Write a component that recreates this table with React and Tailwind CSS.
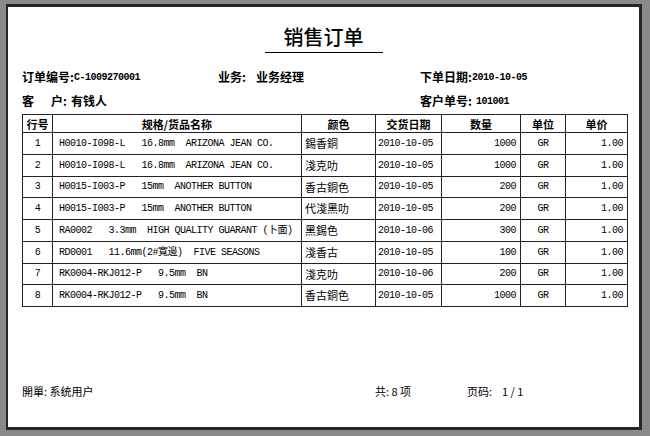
import React from "react";

const rows = [
  { no: 1, spec: "H0010-I098-L   16.8mm  ARIZONA JEAN CO.", color: "錫香銅", date: "2010-10-05", qty: 1000 },
  { no: 2, spec: "H0010-I098-L   16.8mm  ARIZONA JEAN CO.", color: "淺克叻", date: "2010-10-05", qty: 1000 },
  { no: 3, spec: "H0015-I003-P   15mm  ANOTHER BUTTON", color: "香古銅色", date: "2010-10-05", qty: 200 },
  { no: 4, spec: "H0015-I003-P   15mm  ANOTHER BUTTON", color: "代淺黑叻", date: "2010-10-05", qty: 200 },
  { no: 5, spec: "RA0002   3.3mm  HIGH QUALITY GUARANT (卜面)", color: "黑錫色", date: "2010-10-06", qty: 300 },
  { no: 6, spec: "RD0001   11.6mm(2#寬邊)  FIVE SEASONS", color: "淺香古", date: "2010-10-05", qty: 100 },
  { no: 7, spec: "RK0004-RKJ012-P   9.5mm  BN", color: "淺克叻", date: "2010-10-06", qty: 200 },
  { no: 8, spec: "RK0004-RKJ012-P   9.5mm  BN", color: "香古銅色", date: "2010-10-05", qty: 1000 },
];

const headers = ["行号", "规格/货品名称", "颜色", "交货日期", "数量", "单位", "单价"];

const cjk = "font-['Noto_Sans_CJK_SC',sans-serif]";
const mono = "font-['Liberation_Mono','Noto_Sans_CJK_SC',monospace] text-[10px] tracking-[-0.5px]";

const SalesOrder = () => {
  return (
    <div className={`w-[650px] h-[436px] bg-[#8a8a8a] pt-[4px] pl-[6px] overflow-hidden ${cjk}`}>
      <div className="w-[636px] h-[426px] bg-white border-l-2 border-t-[3px] border-r-[3px] border-b-[3px] border-[#262626] flex flex-col text-black">
        {/* title */}
        <div className="mt-[18px] text-center text-[20px] leading-[24px] font-medium">销售订单</div>
        <div className="mx-auto mt-[3px] w-[118px] h-px bg-black"></div>

        {/* order info */}
        <div className="mt-[12px] pl-[14px] grid grid-cols-[196px_202px_1fr] text-[12px] font-bold">
          <div className="h-[24px] flex items-center">
            订单编号:<span className={mono + " font-bold"}>C-1009270001</span>
          </div>
          <div className="h-[24px] flex items-center">
            业务:<span className="ml-[10px]">业务经理</span>
          </div>
          <div className="h-[24px] flex items-center">
            下单日期:<span className={mono + " font-bold"}>2010-10-05</span>
          </div>
          <div className="h-[24px] flex items-center">
            <span className="mr-[17px]">客</span>户:<span className="ml-[4px]">有钱人</span>
          </div>
          <div></div>
          <div className="h-[24px] flex items-center">
            客户单号:<span className={mono + " font-bold ml-[4px]"}>101001</span>
          </div>
        </div>

        {/* items */}
        <table className="mt-[1px] ml-[14px] w-[605px] table-fixed border-collapse border border-black text-[11px]">
          <colgroup>
            <col className="w-[30px]" />
            <col className="w-[249px]" />
            <col className="w-[74px]" />
            <col className="w-[66px]" />
            <col className="w-[79px]" />
            <col className="w-[45px]" />
            <col className="w-[62px]" />
          </colgroup>
          <thead>
            <tr className="h-[18px]">
              {headers.map((h) => (
                <th key={h} className="border border-[#222] p-0 font-bold text-[11px] leading-[16px] text-center">
                  {h}
                </th>
              ))}
            </tr>
          </thead>
          <tbody>
            {rows.map((r) => (
              <tr key={r.no} className="h-[21.75px]">
                <td className={`border border-[#222] p-0 text-center ${mono}`}>{r.no}</td>
                <td className={`border border-[#222] py-0 pl-[6px] whitespace-pre ${mono}`}>{r.spec}</td>
                <td className="border border-[#222] py-0 pl-[3px] text-[11px]">{r.color}</td>
                <td className={`border border-[#222] py-0 pl-[2px] ${mono}`}>{r.date}</td>
                <td className={`border border-[#222] py-0 pr-[4px] text-right ${mono}`}>{r.qty}</td>
                <td className={`border border-[#222] p-0 text-center ${mono}`}>GR</td>
                <td className={`border border-[#222] py-0 pr-[4px] text-right ${mono}`}>1.00</td>
              </tr>
            ))}
          </tbody>
        </table>

        {/* footer */}
        <div className="mt-[76px] pl-[14px] h-[16px] flex items-center text-[11px]">
          <div className="w-[353px]">開單: 系统用户</div>
          <div className="w-[92px] whitespace-pre">共: 8 项</div>
          <div className="whitespace-pre">页码:    1 / 1</div>
        </div>
      </div>
    </div>
  );
};

export default function App() {
  return <SalesOrder />;
}
